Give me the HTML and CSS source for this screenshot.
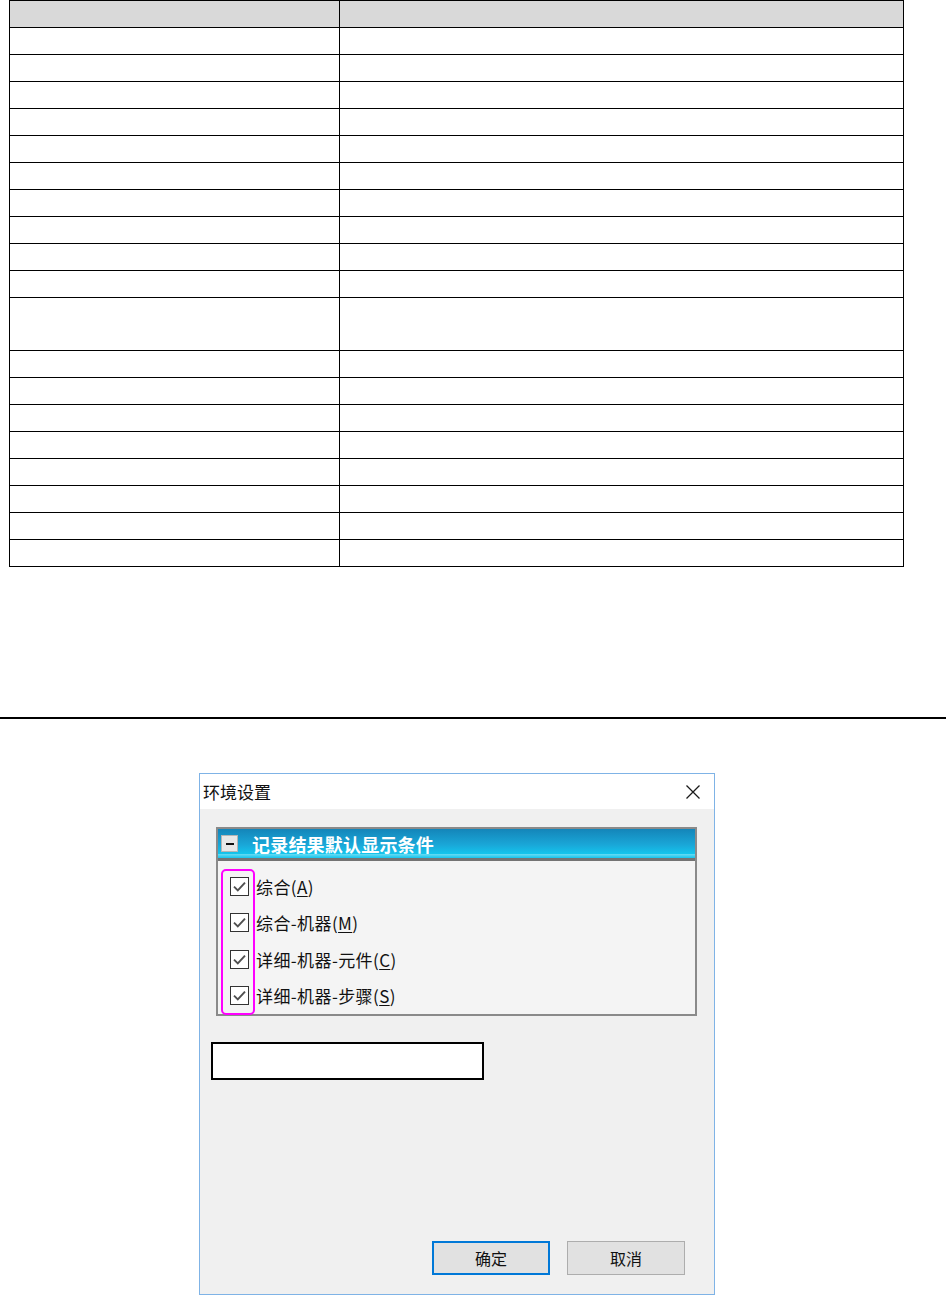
FILE: index.html
```html
<!DOCTYPE html>
<html lang="zh-CN">
<head>
<meta charset="utf-8">
<title>环境设置</title>
<link rel="stylesheet" href="styles.css">
</head>
<body>
<table class="grid">
  <tr class="head"><td class="c1"></td><td></td></tr>
  <tr><td class="c1"></td><td></td></tr>
  <tr><td class="c1"></td><td></td></tr>
  <tr><td class="c1"></td><td></td></tr>
  <tr><td class="c1"></td><td></td></tr>
  <tr><td class="c1"></td><td></td></tr>
  <tr><td class="c1"></td><td></td></tr>
  <tr><td class="c1"></td><td></td></tr>
  <tr><td class="c1"></td><td></td></tr>
  <tr><td class="c1"></td><td></td></tr>
  <tr><td class="c1"></td><td></td></tr>
  <tr class="tall"><td class="c1"></td><td></td></tr>
  <tr><td class="c1"></td><td></td></tr>
  <tr><td class="c1"></td><td></td></tr>
  <tr><td class="c1"></td><td></td></tr>
  <tr><td class="c1"></td><td></td></tr>
  <tr><td class="c1"></td><td></td></tr>
  <tr><td class="c1"></td><td></td></tr>
  <tr><td class="c1"></td><td></td></tr>
  <tr><td class="c1"></td><td></td></tr>
</table>

<div class="rule"></div>

<div class="dialog">
  <div class="titlebar">
    <span class="title">环境设置</span>
    <svg class="close" width="16" height="16" viewBox="0 0 16 16"><path d="M1.5 1.5 L14.5 14.5 M14.5 1.5 L1.5 14.5" stroke="#1a1a1a" stroke-width="1.3" fill="none"/></svg>
  </div>
  <div class="dbody">
    <div class="group">
      <div class="group-head">
        <span class="toggle"><span class="minus"></span></span>
        <span class="group-title">记录结果默认显示条件</span>
      </div>
      <div class="group-list">
        <div class="item"><span class="cb"><svg width="15" height="15" viewBox="0 0 15 15"><path d="M2 7.6 L5.8 11.4 L13 3.6" stroke="#505050" stroke-width="1.9" fill="none"/></svg></span><span class="lbl">综合(<u>A</u>)</span></div>
        <div class="item"><span class="cb"><svg width="15" height="15" viewBox="0 0 15 15"><path d="M2 7.6 L5.8 11.4 L13 3.6" stroke="#505050" stroke-width="1.9" fill="none"/></svg></span><span class="lbl">综合-机器(<u>M</u>)</span></div>
        <div class="item"><span class="cb"><svg width="15" height="15" viewBox="0 0 15 15"><path d="M2 7.6 L5.8 11.4 L13 3.6" stroke="#505050" stroke-width="1.9" fill="none"/></svg></span><span class="lbl">详细-机器-元件(<u>C</u>)</span></div>
        <div class="item"><span class="cb"><svg width="15" height="15" viewBox="0 0 15 15"><path d="M2 7.6 L5.8 11.4 L13 3.6" stroke="#505050" stroke-width="1.9" fill="none"/></svg></span><span class="lbl">详细-机器-步骤(<u>S</u>)</span></div>
        <div class="highlight"></div>
      </div>
    </div>
    <div class="textbox"></div>
    <div class="buttons">
      <button class="btn primary">确定</button>
      <button class="btn">取消</button>
    </div>
  </div>
</div>
</body>
</html>
```

FILE: styles.css
```css
html, body {
  margin: 0;
  padding: 0;
  background: #ffffff;
  font-family: "Noto Sans CJK SC", "Noto Sans", sans-serif;
}

.grid {
  border-collapse: collapse;
  margin-left: 9px;
  width: 895px;
  table-layout: fixed;
}
.grid td {
  border: 1px solid #000;
  height: 26px;
  padding: 0;
}
.grid td.c1 { width: 329px; }
.grid tr.head td { background: #d9d9d9; }
.grid tr.tall td { height: 52px; }

.rule {
  margin-top: 150px;
  height: 2px;
  background: #000;
}

.dialog {
  margin-top: 54px;
  margin-left: 199px;
  width: 516px;
  height: 522px;
  border: 1px solid #7fb3e6;
  background: #f0f0f0;
  display: flex;
  flex-direction: column;
  box-sizing: border-box;
}

.titlebar {
  height: 35px;
  background: #ffffff;
  display: flex;
  align-items: center;
  justify-content: space-between;
  padding: 0 13px 0 3px;
  flex-shrink: 0;
}
.title {
  font-size: 17px;
  color: #111;
}
.close { display: block; }

.dbody {
  padding: 18px 0 0 11px;
  display: flex;
  flex-direction: column;
  flex: 1;
}

.group {
  margin-left: 5px;
  width: 481px;
  border: 2px solid #8a8a8a;
  box-sizing: border-box;
  background: #f4f4f4;
}
.group-head {
  height: 29px;
  background: linear-gradient(#1485b9 0%, #1aa7d8 55%, #14c4ec 85%, #5fd9f3 88%, #14c4ec 100%);
  border-bottom: 3px solid #737373;
  display: flex;
  align-items: center;
  padding-left: 3px;
}
.toggle {
  width: 17px;
  height: 17px;
  background: #e8e8e8;
  border: 1px solid #b5b5b5;
  box-sizing: border-box;
  display: flex;
  align-items: center;
  justify-content: center;
}
.minus {
  width: 8px;
  height: 2px;
  background: #111;
}
.group-title {
  margin-left: 14px;
  color: #ffffff;
  font-weight: bold;
  font-size: 18px;
  letter-spacing: 0.2px;
}

.group-list {
  position: relative;
  height: 153px;
  padding-top: 7px;
  padding-left: 12px;
  box-sizing: border-box;
}
.item {
  height: 36.5px;
  display: flex;
  align-items: center;
}
.cb {
  width: 19px;
  height: 19px;
  box-sizing: border-box;
  border: 1px solid #333;
  background: #ffffff;
  display: flex;
  align-items: center;
  justify-content: center;
}
.lbl {
  margin-left: 7px;
  font-size: 17px;
  letter-spacing: 0.4px;
  color: #111;
}
.lbl u { text-underline-offset: 2px; }

.highlight {
  position: absolute;
  left: 3px;
  top: 8px;
  width: 34px;
  height: 146px;
  box-sizing: border-box;
  border: 2.5px solid #ff00ff;
  border-radius: 5px;
}

.textbox {
  margin-top: 26px;
  width: 273px;
  height: 38px;
  box-sizing: border-box;
  border: 2px solid #000;
  background: #fff;
}

.buttons {
  margin-top: 161px;
  display: flex;
  justify-content: flex-end;
  gap: 17px;
  padding-right: 29px;
}
.btn {
  width: 118px;
  height: 34px;
  box-sizing: border-box;
  border: 1px solid #adadad;
  background: #e1e1e1;
  font-family: "Noto Sans CJK SC", "Noto Sans", sans-serif;
  font-size: 16px;
  color: #111;
  padding: 0;
}
.btn.primary {
  border: 2px solid #0078d7;
}
```
